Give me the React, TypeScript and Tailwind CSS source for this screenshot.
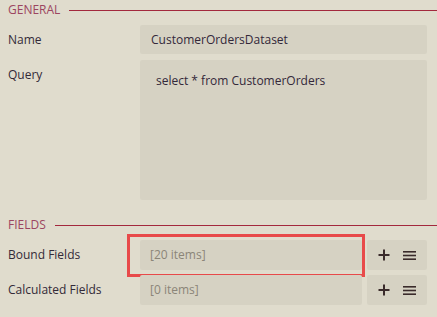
import React from "react";

const font = { fontFamily: '"Open Sans", "Noto Sans", sans-serif' };

function Header({ title }: { title: string }) {
  return (
    <div className="flex items-center pl-2 h-[20px]">
      <span className="text-[12px] leading-none text-[#9c4560]">{title}</span>
      <div className="flex-1 h-px bg-[#a3283d] ml-[9px]" />
    </div>
  );
}

function PlusIcon() {
  return (
    <svg width="12" height="12" viewBox="0 0 12 12">
      <rect x="5" y="0.5" width="2" height="11" fill="#3a2b2b" />
      <rect x="0.5" y="5" width="11" height="2" fill="#3a2b2b" />
    </svg>
  );
}

function MenuIcon() {
  return (
    <svg width="13" height="11" viewBox="0 0 13 11">
      <rect x="0" y="1" width="13" height="1.6" fill="#3a2b2b" />
      <rect x="0" y="4.7" width="13" height="1.6" fill="#3a2b2b" />
      <rect x="0" y="8.4" width="13" height="1.6" fill="#3a2b2b" />
    </svg>
  );
}

function FieldRow({ label, value, highlight }: { label: string; value: string; highlight?: boolean }) {
  return (
    <div className="flex items-center pl-2 pr-[10px] h-[30px] relative">
      <div className="w-[132px] text-[12px] text-[#332a38]">{label}</div>
      <div className="flex-1 h-[30px] rounded-[2px] bg-[#d6d2c3] flex items-center pl-[10px] text-[12px] text-[#8b8578]">
        {value}
      </div>
      <div className="w-[60px] ml-[5px] h-[30px] rounded-[2px] bg-[#d6d2c3] flex items-center justify-around px-[4px]">
        <PlusIcon />
        <MenuIcon />
      </div>
      {highlight && (
        <div className="absolute left-[127px] top-[-6px] w-[238px] h-[43px] border-[3px] border-[#e84a4a]" />
      )}
    </div>
  );
}

export default function App() {
  return (
    <div className="w-[437px] h-[317px] bg-[#e0dccd] overflow-hidden" style={font}>
      <Header title="GENERAL" />
      <div className="flex items-center pl-2 pr-[10px] mt-[5px] h-[29px]">
        <div className="w-[132px] text-[12px] text-[#332a38]">Name</div>
        <div className="flex-1 h-[29px] rounded-[2px] bg-[#d6d2c3] flex items-center pl-[11px] text-[12px] text-[#33283a]">
          CustomerOrdersDataset
        </div>
      </div>
      <div className="flex items-start pl-2 pr-[10px] mt-[6px]">
        <div className="w-[132px] text-[12px] text-[#332a38] pt-[6px]">Query</div>
        <div className="flex-1 h-[140px] rounded-[2px] bg-[#d6d2c3] pl-[16px] pt-[12px] text-[12px] text-[#33283a]">
          select * from CustomerOrders
        </div>
      </div>
      <div className="mt-[15px]">
        <Header title="FIELDS" />
      </div>
      <div className="mt-[5px]">
        <FieldRow label="Bound Fields" value="[20 items]" highlight />
      </div>
      <div className="mt-[5px]">
        <FieldRow label="Calculated Fields" value="[0 items]" />
      </div>
    </div>
  );
}
